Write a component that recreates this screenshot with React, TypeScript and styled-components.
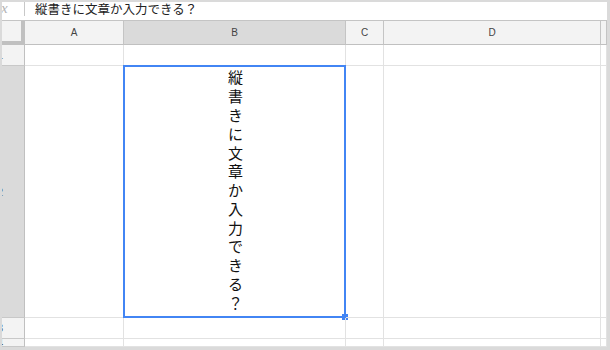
import React from 'react';
import styled, { createGlobalStyle } from 'styled-components';

const GlobalStyle = createGlobalStyle`
  html, body {
    margin: 0;
    padding: 0;
    background: #dadada;
  }
  body {
    font-family: Arial, "Liberation Sans", "Noto Sans CJK JP", sans-serif;
  }
`;

const Frame = styled.div`
  width: 610px;
  height: 350px;
  box-sizing: border-box;
  padding: 2px 3px 3px 2px;
  background: #dadada;
`;

const Sheet = styled.div`
  width: 100%;
  height: 100%;
  background: #fff;
  overflow: hidden;
  display: flex;
  flex-direction: column;
`;

const FormulaBar = styled.div`
  height: 19px;
  flex: none;
  box-sizing: border-box;
  border-bottom: 1px solid #c4c4c4;
  display: flex;
  align-items: flex-start;
`;

const FxLabel = styled.div`
  width: 22px;
  height: 14px;
  flex: none;
  overflow: hidden;
  border-right: 1px solid #c8c8c8;
  color: #b3b3b3;
  font: italic 15px "Liberation Serif", serif;
  line-height: 13px;
  text-indent: -1px;
`;

const FormulaText = styled.div`
  margin-left: 10px;
  font-size: 12.5px;
  line-height: 16px;
  color: #222;
  font-family: Arial, "Liberation Sans", "Noto Sans CJK JP", sans-serif;
`;

const Grid = styled.div`
  flex: 1;
  display: grid;
  grid-template-columns: 23px 99px 222px 38px 217px 1fr;
  grid-template-rows: 24px 21px 252px 21px 1fr;
  overflow: hidden;
`;

const Corner = styled.div`
  box-sizing: border-box;
  background: #f3f3f3;
  border-right: 4px solid #c0c0c0;
  border-bottom: 4px solid #c0c0c0;
`;

const ColHead = styled.div<{ $active?: boolean }>`
  box-sizing: border-box;
  background: ${({ $active }) => ($active ? '#dadada' : '#f3f3f3')};
  border-right: 1px solid #c4c4c4;
  border-bottom: 1px solid #c0c0c0;
  display: flex;
  align-items: center;
  justify-content: center;
  font-size: 10px;
  color: #444;
`;

const RowHead = styled.div<{ $active?: boolean }>`
  box-sizing: border-box;
  background: ${({ $active }) => ($active ? '#dadada' : '#f3f3f3')};
  border-right: 1px solid #c0c0c0;
  border-bottom: 1px solid #c8c8c8;
  overflow: hidden;
  display: flex;
  align-items: center;
  font-size: 11px;
  color: #555;
`;

const RowLabel = styled.span`
  margin-left: -5px;
`;

const Cell = styled.div`
  position: relative;
  box-sizing: border-box;
  border-right: 1px solid #e2e2e2;
  border-bottom: 1px solid #e2e2e2;
`;

const TextCell = styled(Cell)`
  display: flex;
  align-items: center;
  justify-content: center;
`;

const VerticalText = styled.div`
  display: flex;
  flex-direction: column;
  align-items: center;
  font-size: 15px;
  line-height: 18.8px;
  color: #111;
  font-family: "Noto Sans CJK JP", sans-serif;
  margin-left: 2px;
  margin-top: -2px;
`;

const Glyph = styled.span`
  display: block;
  width: 1em;
  text-align: center;
`;

const Selection = styled.div`
  position: absolute;
  left: -1px;
  top: -1px;
  width: 223px;
  height: 253px;
  box-sizing: border-box;
  border: 2px solid #4285f4;
  pointer-events: none;
`;

const Handle = styled.div`
  position: absolute;
  right: -4px;
  bottom: -4px;
  width: 6px;
  height: 6px;
  background: #4285f4;
`;

const columns = ['A', 'B', 'C', 'D', ''];
const text = '縦書きに文章か入力できる？';

export default function App() {
  const rows = [1, 2, 3, 4];
  return (
    <>
      <GlobalStyle />
      <Frame>
        <Sheet>
          <FormulaBar>
            <FxLabel>x</FxLabel>
            <FormulaText>{text}</FormulaText>
          </FormulaBar>
          <Grid>
            <Corner />
            {columns.map((c, i) => (
              <ColHead key={i} $active={c === 'B'}>{c}</ColHead>
            ))}
            {rows.map((r) => (
              <React.Fragment key={r}>
                <RowHead $active={r === 2}>
                  <RowLabel>{r}</RowLabel>
                </RowHead>
                {columns.map((c, i) =>
                  r === 2 && c === 'B' ? (
                    <TextCell key={i}>
                      <VerticalText>
                        {Array.from(text).map((ch, k) => (
                          <Glyph key={k}>{ch}</Glyph>
                        ))}
                      </VerticalText>
                      <Selection>
                        <Handle />
                      </Selection>
                    </TextCell>
                  ) : (
                    <Cell key={i} />
                  )
                )}
              </React.Fragment>
            ))}
          </Grid>
        </Sheet>
      </Frame>
    </>
  );
}
